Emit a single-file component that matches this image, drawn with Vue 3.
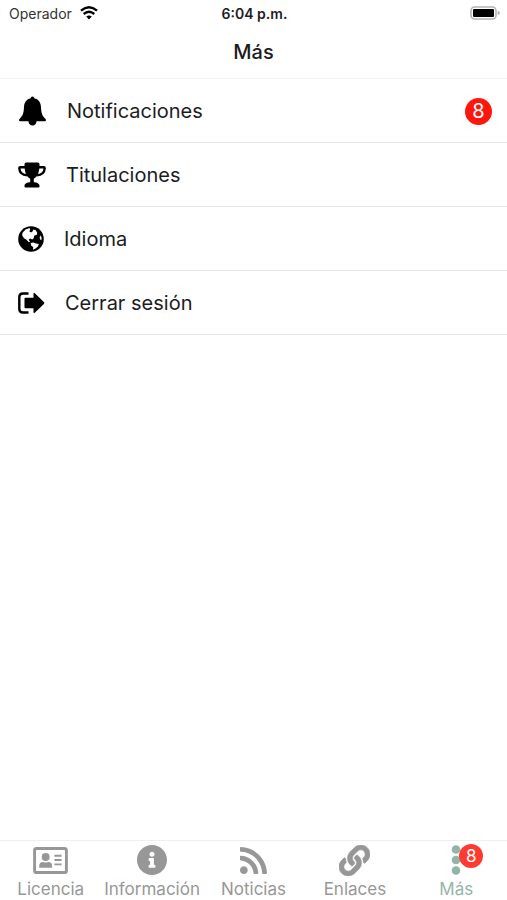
<script setup>
const rows = [
  { id: 'bell', label: 'Notificaciones', badge: 8 },
  { id: 'trophy', label: 'Titulaciones' },
  { id: 'globe', label: 'Idioma' },
  { id: 'exit', label: 'Cerrar sesión' },
]

const tabs = [
  { id: 'card', label: 'Licencia' },
  { id: 'info', label: 'Información' },
  { id: 'rss', label: 'Noticias' },
  { id: 'link', label: 'Enlaces' },
  { id: 'more', label: 'Más', badge: 8, active: true },
]
</script>

<template>
  <div class="screen">
    <div class="status">
      <div class="carrier">
        <span>Operador</span>
        <svg class="wifi" viewBox="0 0 18 14" aria-hidden="true">
          <path d="M1 4.7Q9-2 17 4.7" />
          <path d="M3.7 8Q9 3.6 14.3 8" />
          <path class="dot" d="M6.2 10.5Q9 8.3 11.8 10.5L9 13.6z" />
        </svg>
      </div>
      <time class="clock">6:04 p.m.</time>
      <svg class="battery" viewBox="0 0 30 14" aria-hidden="true">
        <rect x="1" y="1" width="25" height="12" rx="3.5" fill="#fff" stroke="#b4b4b4" stroke-width="1.6" />
        <rect x="3" y="3" width="21" height="8" rx="1" fill="#000" />
        <path d="M27.6 4.8Q30 5.400 30 7T27.600 9.200z" fill="#b4b4b4" />
      </svg>
    </div>

    <header class="header"><h1>Más</h1></header>

    <main class="content">
      <ul class="list">
        <li v-for="row in rows" :key="row.id">
          <button type="button" class="row">
            <svg v-if="row.id === 'bell'" class="icon bell" viewBox="0 0 28 30" aria-hidden="true">
              <path d="M14 .5c1 0 1.700.7 1.800 1.800C20 3.200 22.300 6.500 22.500 11c.2 6 1.200 8.800 4.500 12 1 1 .5 2.200-.8 2.200H1.800C.5 25.200 0 24 1 23c3.300-3.200 4.300-6 4.500-12 .2-4.500 2.500-7.800 6.700-8.700C12.300 1.200 13 .5 14 .5z" />
              <path d="M10 25h8c0 2.800-1.700 4.500-4 4.500S10 27.800 10 25z" />
            </svg>
            <svg v-else-if="row.id === 'trophy'" class="icon trophy" viewBox="0 0 28 26" aria-hidden="true">
              <path d="M8.200.5h11.600q1.700 0 1.700 1.700C21.500 9.500 20 14.500 15.800 16.800v3.400c3 .2 5.700 1.300 5.700 3.600v.7q0 1-1 1H7.500q-1 0-1-1v-.7c0-2.300 2.700-3.400 5.700-3.600v-3.400C8 14.500 6.500 9.500 6.500 2.200Q6.500.5 8.200.5z" />
              <path class="line" d="M7.500 5.300H2.200Q1.300 5.300 1.300 6.200C1.500 10.200 4.500 13 9.300 13.300M20.500 5.300h5.300q.9 0 .9.900c-.2 4-3.200 6.800-8 7.100" />
            </svg>
            <svg v-else-if="row.id === 'globe'" class="icon globe" viewBox="0 0 26 26" aria-hidden="true">
              <circle cx="13" cy="13" r="12.800" />
              <path class="land" d="M4.200 9.500L4.400 7 7.500 3.500 11.500 2l.7 1.900-1 1.400 1.900 1.300 1.600-1.400.6-1.700 2.500.8L19.300 7l-.7 1.900-2.300.7-.6 2.700-1.500 1.100-2-.9-1.600 1.300 1.500 2-1.300.4-2.600-2.700-2.200-1.300z" />
              <path class="land" d="M12.600 17l2.700-.6 2.500 1.200 3 .5-.8 2.300-2.500 2.200-2.500 1.100.2-2.600-1.900-1.400z" />
              <path class="land" d="M22.500 9.200l1 2.300-.1 2.800-1.200-.8-.5-2z" />
            </svg>
            <svg v-else class="icon exit" viewBox="0 0 27 22" aria-hidden="true">
              <path class="line" d="M10.500 1.500H5Q1.300 1.500 1.300 5v12q0 3.500 3.700 3.500h5.500" />
              <path d="M7.500 5.700h8V1.900q0-1.800 1.300-.6l9.100 8.700q1 1 0 2l-9.100 8.700q-1.300 1.200-1.300-.6v-3.800h-8q-1 0-1-1V6.700q0-1 1-1z" />
            </svg>
            <span class="label">{{ row.label }}</span>
            <span v-if="row.badge" class="badge">{{ row.badge }}</span>
          </button>
        </li>
      </ul>
    </main>

    <nav class="tabs">
      <a v-for="tab in tabs" :key="tab.id" href="#" class="tab" :class="{ active: tab.active }">
        <span class="glyph">
          <svg v-if="tab.id === 'card'" class="card" viewBox="0 0 36 28" aria-hidden="true">
            <rect x="1.500" y="1.500" width="33" height="25" rx="2" fill="none" stroke="currentColor" stroke-width="3" />
            <circle cx="13" cy="10.300" r="4.100" />
            <path d="M6.300 21.500v-1.700q0-4.300 4-4.300 2.700 1.100 5.400 0 4 0 4 4.300v1.700z" />
            <path d="M22 9h7.500M22 13.500h7.500M22 18h7.500" stroke="currentColor" stroke-width="2" />
          </svg>
          <svg v-else-if="tab.id === 'info'" class="info" viewBox="8 8 496 496" aria-hidden="true">
            <path d="M256 8C119.043 8 8 119.083 8 256c0 136.997 111.043 248 248 248s248-111.003 248-248C504 119.083 392.957 8 256 8zm0 110c23.196 0 42 18.804 42 42s-18.804 42-42 42-42-18.804-42-42 18.804-42 42-42zm56 254c0 6.627-5.373 12-12 12h-88c-6.627 0-12-5.373-12-12v-24c0-6.627 5.373-12 12-12h12v-64h-12c-6.627 0-12-5.373-12-12v-24c0-6.627 5.373-12 12-12h64c6.627 0 12 5.373 12 12v100h12c6.627 0 12 5.373 12 12v24z" />
          </svg>
          <svg v-else-if="tab.id === 'rss'" class="rss" viewBox="0 32 448 448" aria-hidden="true">
            <path d="M128.081 415.959c0 35.369-28.672 64.041-64.041 64.041S0 451.328 0 415.959s28.672-64.041 64.041-64.041 64.040 28.673 64.040 64.041zm175.660 47.250c-8.354-154.600-132.185-278.587-286.950-286.950C7.656 175.765 0 183.105 0 192.253v48.069c0 8.415 6.490 15.472 14.887 16.018 111.832 7.284 201.473 96.702 208.772 208.772.547 8.397 7.604 14.887 16.018 14.887h48.069c9.149.001 16.489-7.655 15.995-16.790zm144.249.288C439.596 229.677 251.465 40.445 16.503 32.010 7.473 31.686 0 38.981 0 48.016v48.068c0 8.625 6.835 15.645 15.453 15.999 191.179 7.839 344.627 161.316 352.465 352.465.353 8.618 7.373 15.453 15.999 15.453h48.068c9.034-.001 16.329-7.474 16.005-16.504z" />
          </svg>
          <svg v-else-if="tab.id === 'link'" class="link" viewBox="0 0 512 512" aria-hidden="true">
            <path d="M326.612 185.391c59.747 59.809 58.927 155.698.360 214.590-.110.120-.240.250-.360.370l-67.200 67.200c-59.270 59.270-155.699 59.262-214.960 0-59.270-59.260-59.270-155.700 0-214.960l37.106-37.106c9.840-9.840 26.786-3.300 27.294 10.606.648 17.722 3.826 35.527 9.690 52.721 1.986 5.822.567 12.262-3.783 16.612l-13.087 13.087c-28.026 28.026-28.905 73.660-1.155 101.960 28.024 28.579 74.086 28.749 102.325.510l67.200-67.190c28.191-28.191 28.073-73.757 0-101.830-3.701-3.694-7.429-6.564-10.341-8.569a16.037 16.037 0 0 1-6.947-12.606c-.396-10.567 3.348-21.456 11.698-29.806l21.054-21.055c5.521-5.521 14.182-6.199 20.584-1.731a152.482 152.482 0 0 1 20.522 17.197zM467.547 44.449c-59.261-59.262-155.690-59.270-214.960 0l-67.200 67.200c-.120.120-.250.250-.360.370-58.566 58.892-59.387 154.781.360 214.590a152.454 152.454 0 0 0 20.521 17.196c6.402 4.468 15.064 3.789 20.584-1.731l21.054-21.055c8.350-8.350 12.094-19.239 11.698-29.806a16.037 16.037 0 0 0-6.947-12.606c-2.912-2.005-6.640-4.875-10.341-8.569-28.073-28.073-28.191-73.639 0-101.830l67.200-67.190c28.239-28.239 74.300-28.069 102.325.510 27.750 28.300 26.872 73.934-1.155 101.960l-13.087 13.087c-4.350 4.350-5.769 10.790-3.783 16.612 5.864 17.194 9.042 34.999 9.690 52.721.509 13.906 17.454 20.446 27.294 10.606l37.106-37.106c59.271-59.259 59.271-155.699.001-214.959z" stroke="currentColor" stroke-width="10" />
          </svg>
          <svg v-else class="more" viewBox="0 0 10 30" aria-hidden="true">
            <circle cx="5" cy="4.500" r="4.300" />
            <circle cx="5" cy="15" r="4.300" />
            <circle cx="5" cy="25.500" r="4.300" />
          </svg>
          <span v-if="tab.badge" class="tab-badge">{{ tab.badge }}</span>
        </span>
        <span>{{ tab.label }}</span>
      </a>
    </nav>
  </div>
</template>

<style>
body {
  margin: 0;
  background: #fff;
}
</style>

<style scoped>
.screen {
  display: flex;
  flex-direction: column;
  min-height: 100vh;
  color: #1c1c1e;
  font-family: Inter, "Liberation Sans", sans-serif;
}

.status {
  display: grid;
  grid-template-columns: 1fr auto 1fr;
  align-items: center;
  height: 26px;
  padding: 0 7px 0 9px;
  font-size: 14px;
}

.carrier {
  display: flex;
  align-items: center;
  gap: 8px;
  color: #333;
}

.wifi {
  width: 18px;
  height: 14px;
  fill: none;
  stroke: #000;
  stroke-width: 2.400;
}

.wifi .dot {
  fill: #000;
  stroke: none;
}

.clock {
  font-weight: 600;
}

.battery {
  justify-self: end;
  width: 30px;
  height: 14px;
}

.header {
  display: flex;
  align-items: center;
  justify-content: center;
  height: 52px;
  border-bottom: 1px solid #f2f2f2;
}

.header h1 {
  margin: 0;
  font-size: 20px;
  font-weight: 500;
}

.content {
  flex: 1;
}

.list {
  margin: 0;
  padding: 0;
  list-style: none;
}

.row {
  display: flex;
  align-items: center;
  gap: 20px;
  width: 100%;
  height: 64px;
  padding: 1px 15px 0 18px;
  border: 0;
  border-bottom: 1px solid #e6e6e6;
  background: #fff;
  color: inherit;
  font: inherit;
  font-size: 20px;
  text-align: left;
}

.icon {
  flex: none;
  fill: #000;
}

.icon .line {
  fill: none;
  stroke: #000;
  stroke-width: 2.400;
}

.icon .land {
  fill: #fff;
}

.bell {
  width: 29px;
  height: 30px;
}

.trophy {
  width: 28px;
  height: 26px;
}

.globe {
  width: 26px;
  height: 26px;
}

.exit {
  width: 27px;
  height: 22px;
}

.label {
  flex: 1;
}

.badge {
  width: 27px;
  height: 27px;
  border-radius: 50%;
  background: #ff160c;
  color: #fff;
  line-height: 27px;
  text-align: center;
}

.tabs {
  display: grid;
  grid-template-columns: repeat(5, 1fr);
  height: 59px;
  border-top: 1px solid #efefef;
}

.tab {
  display: flex;
  flex-direction: column;
  align-items: center;
  gap: 2px;
  padding-top: 3px;
  color: #979797;
  font-size: 17px;
  line-height: 22px;
  text-decoration: none;
}

.tab.active {
  color: #93b5a9;
}

.glyph {
  position: relative;
  display: flex;
  align-items: center;
  justify-content: center;
  height: 32px;
}

.glyph svg {
  fill: currentColor;
}

.card {
  width: 35px;
  height: 27px;
}

.info {
  width: 30px;
  height: 30px;
}

.rss {
  width: 27px;
  height: 27px;
}

.link {
  width: 31px;
  height: 31px;
}

.more {
  width: 10px;
  height: 30px;
}

.tab-badge {
  position: absolute;
  top: 0;
  left: 8px;
  width: 24px;
  height: 24px;
  border-radius: 50%;
  background: #ff3a30;
  color: #fff;
  font-size: 17px;
  line-height: 24px;
  text-align: center;
}
</style>
